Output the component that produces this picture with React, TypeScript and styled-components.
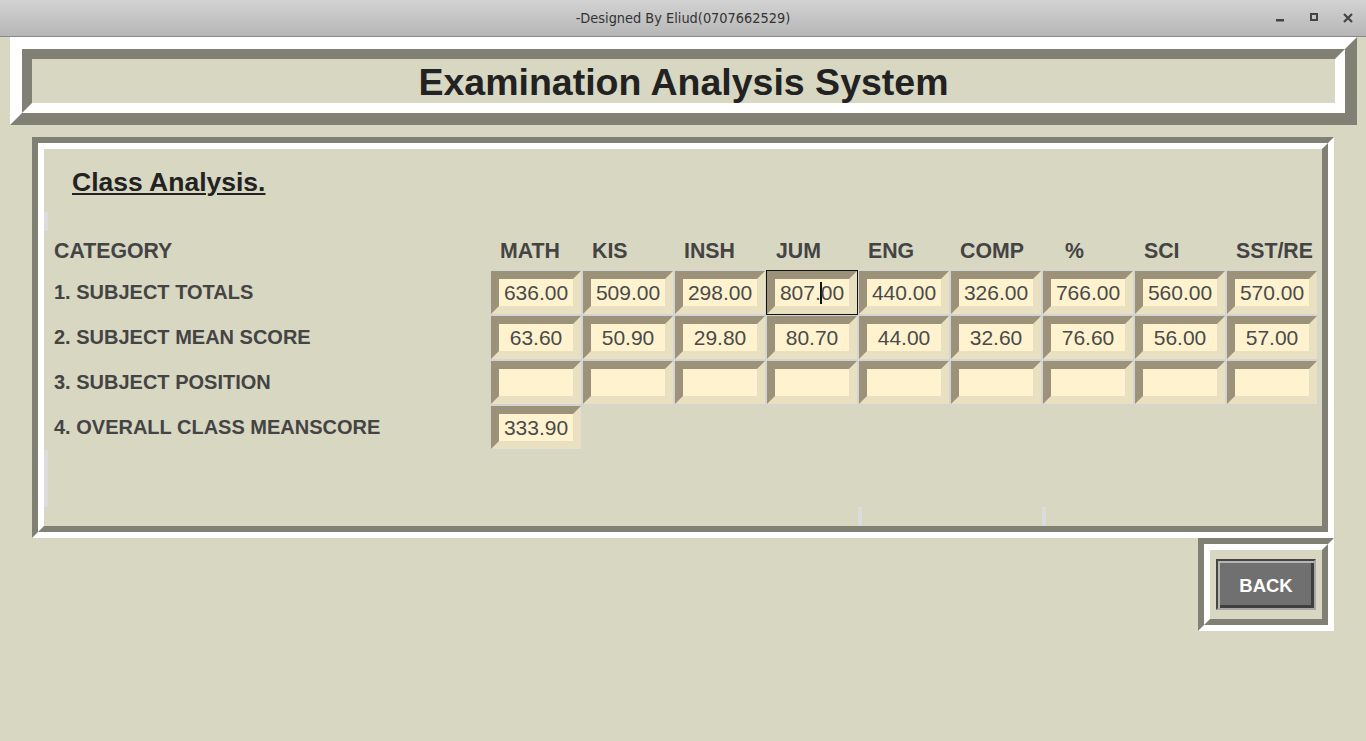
import * as React from 'react'
import styled, { createGlobalStyle } from 'styled-components'

const BG = '#d8d7c2'
const SHADE = '#808074'
const LIGHT = '#ffffff'

const GlobalStyle = createGlobalStyle`
  html, body {
    margin: 0;
    padding: 0;
    height: 100%;
    overflow: hidden;
    background: ${BG};
    font-family: "Liberation Sans", Arial, sans-serif;
  }
`

const subjects = ['MATH', 'KIS', 'INSH', 'JUM', 'ENG', 'COMP', '%', 'SCI', 'SST/RE']
const totals = ['636.00', '509.00', '298.00', '807.00', '440.00', '326.00', '766.00', '560.00', '570.00']
const means = ['63.60', '50.90', '29.80', '80.70', '44.00', '32.60', '76.60', '56.00', '57.00']

export default function App() {
  return (
    <Window>
      <GlobalStyle />
      <TitleBar>
        <TitleText>-Designed By Eliud(0707662529)</TitleText>
        <Controls>
          <Control aria-label="minimize">
            <svg width="10" height="10" viewBox="0 0 10 10">
              <rect x="1" y="6" width="8" height="2.5" fill="#444" />
            </svg>
          </Control>
          <Control aria-label="maximize">
            <svg width="10" height="10" viewBox="0 0 10 10">
              <rect x="2" y="1" width="6" height="6" fill="none" stroke="#444" strokeWidth="2" />
            </svg>
          </Control>
          <Control aria-label="close">
            <svg width="10" height="10" viewBox="0 0 10 10">
              <path d="M1 1 L9 9 M9 1 L1 9" stroke="#444" strokeWidth="2.2" />
            </svg>
          </Control>
        </Controls>
      </TitleBar>

      <Body>
        <RaisedFrame>
          <SunkenFrame>
            <AppTitle>Examination Analysis System</AppTitle>
          </SunkenFrame>
        </RaisedFrame>

        <MainArea>
          <Groove>
            <GrooveInner>
              <PanelContent>
                <Ghost style={{ left: 0, top: 63, height: 19 }} />
                <Ghost style={{ left: 0, top: 301, height: 57 }} />
                <Ghost style={{ left: 814, top: 358, height: 19 }} />
                <Ghost style={{ left: 998, top: 358, height: 19 }} />

                <PanelTitle>Class Analysis.</PanelTitle>

                <Table>
                  <HeadLabel>CATEGORY</HeadLabel>
                  {subjects.map(s => (
                    <HeadLabel key={s} $indent={s === '%' ? 23 : 10}>
                      {s}
                    </HeadLabel>
                  ))}

                  <RowLabel>1. SUBJECT TOTALS</RowLabel>
                  {totals.map((v, i) =>
                    i === 3 ? (
                      <Cell key={i} $focused>
                        <Entry>
                          807.<Caret />00
                        </Entry>
                      </Cell>
                    ) : (
                      <Cell key={i}>
                        <Entry>{v}</Entry>
                      </Cell>
                    )
                  )}

                  <RowLabel>2. SUBJECT MEAN SCORE</RowLabel>
                  {means.map((v, i) => (
                    <Cell key={i}>
                      <Entry>{v}</Entry>
                    </Cell>
                  ))}

                  <RowLabel>3. SUBJECT POSITION</RowLabel>
                  {subjects.map(s => (
                    <Cell key={s}>
                      <Entry />
                    </Cell>
                  ))}

                  <RowLabel>4. OVERALL CLASS MEANSCORE</RowLabel>
                  <Cell>
                    <Entry>333.90</Entry>
                  </Cell>
                </Table>
              </PanelContent>
            </GrooveInner>
          </Groove>

          <BackRow>
            <Groove>
              <BackInner>
                <BackButton>BACK</BackButton>
              </BackInner>
            </Groove>
          </BackRow>
        </MainArea>
      </Body>
    </Window>
  )
}

const Window = styled.div`
  width: 1366px;
  height: 741px;
  display: flex;
  flex-direction: column;
  background: ${BG};
`

const TitleBar = styled.div`
  position: relative;
  height: 36px;
  flex: none;
  display: flex;
  align-items: center;
  justify-content: center;
  background: linear-gradient(#d3d3d3, #b6b6b6);
  border-bottom: 1px solid #8a8a8a;
`

const TitleText = styled.div`
  font-family: "DejaVu Sans Condensed", "DejaVu Sans", sans-serif;
  font-stretch: condensed;
  font-size: 14.4px;
  color: #333;
`

const Controls = styled.div`
  position: absolute;
  right: 13px;
  top: 0;
  height: 36px;
  display: flex;
  align-items: center;
  gap: 24px;
`

const Control = styled.div`
  width: 10px;
  height: 10px;
  display: flex;
`

const Body = styled.div`
  flex: 1;
  display: flex;
  flex-direction: column;
`

const RaisedFrame = styled.div`
  margin: 0 9px 0 10px;
  border: 12px solid;
  border-color: ${LIGHT} ${SHADE} ${SHADE} ${LIGHT};
`

const SunkenFrame = styled.div`
  height: 44px;
  border: 10px solid;
  border-color: ${SHADE} ${LIGHT} ${LIGHT} ${SHADE};
  display: flex;
  align-items: center;
  justify-content: center;
`

const AppTitle = styled.h1`
  margin: 0;
  font-size: 37.5px;
  font-weight: bold;
  color: #222;
  line-height: 44px;
  padding-top: 1px;
`

const MainArea = styled.div`
  margin: 12px 32px 0 32px;
  display: flex;
  flex-direction: column;
`

const Groove = styled.div`
  border: 6px solid;
  border-color: ${SHADE} ${LIGHT} ${LIGHT} ${SHADE};
`

const GrooveInner = styled.div`
  border: 6px solid;
  border-color: ${LIGHT} ${SHADE} ${SHADE} ${LIGHT};
  height: 377px;
`

const PanelContent = styled.div`
  position: relative;
  height: 100%;
  padding-top: 18px;
  box-sizing: border-box;
`

const Ghost = styled.div`
  position: absolute;
  width: 4px;
  background: #dcdcdc;
`

const PanelTitle = styled.div`
  margin-left: 28px;
  font-size: 26.5px;
  line-height: 30px;
  font-weight: bold;
  color: #222;
  text-decoration: underline;
  text-decoration-thickness: 2px;
  text-underline-offset: 2px;
`

const Table = styled.div`
  margin: 33px 0 0 10px;
  display: grid;
  grid-template-columns: 436px repeat(9, 92px);
  grid-template-rows: 40px repeat(4, 45px);
`

const HeadLabel = styled.div<{ $indent?: number }>`
  display: flex;
  align-items: center;
  padding-left: ${p => p.$indent ?? 0}px;
  padding-top: 2px;
  font-size: 21.3px;
  font-weight: bold;
  color: #444;
`

const RowLabel = styled.div`
  grid-column: 1;
  display: flex;
  align-items: center;
  font-size: 20px;
  font-weight: bold;
  color: #444;
`

const Cell = styled.div<{ $focused?: boolean }>`
  box-sizing: border-box;
  border: 1px solid ${p => (p.$focused ? '#111' : '#d4d4d4')};
  display: flex;
`

const Entry = styled.div`
  flex: 1;
  border: 8px solid;
  border-color: #9b9279 #e9e0c1 #e9e0c1 #9b9279;
  background: #fff3cf;
  display: flex;
  align-items: center;
  justify-content: center;
  font-size: 21px;
  color: #4a4a4a;
`

const Caret = styled.span`
  display: inline-block;
  width: 2px;
  height: 22px;
  margin: 0 -1px;
  background: #111;
`

const BackRow = styled.div`
  display: flex;
  justify-content: flex-end;
`

const BackInner = styled.div`
  width: 112px;
  height: 69px;
  border: 6px solid;
  border-color: ${LIGHT} ${SHADE} ${SHADE} ${LIGHT};
  display: flex;
  align-items: center;
  justify-content: center;
`

const BackButton = styled.button`
  box-sizing: border-box;
  width: 100px;
  height: 51px;
  padding: 3px 0 0;
  background: #707070;
  border: 2px solid;
  border-color: #444 #a8a8a8 #a8a8a8 #444;
  box-shadow: inset 2px 2px 0 #b5b5b5, inset -3px -3px 0 #3f3f3f;
  color: #fff;
  font-family: "Liberation Sans", Arial, sans-serif;
  font-size: 18.5px;
  font-weight: bold;
`
